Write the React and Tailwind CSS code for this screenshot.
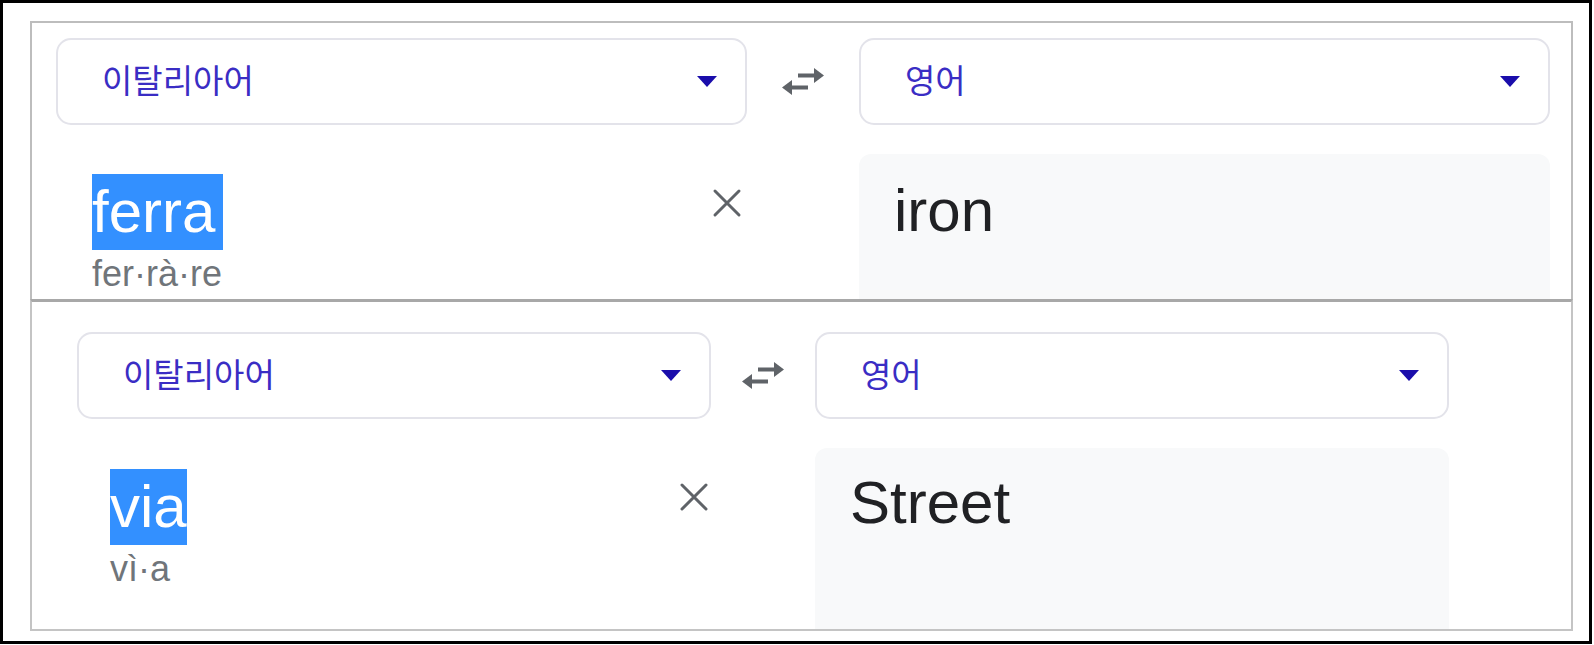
import React from "react";

const latin = { fontFamily: '"Liberation Sans", Arial, sans-serif' };
const korean = { fontFamily: '"Liberation Sans", "Noto Sans CJK KR", sans-serif' };

const DropArrow = () => (
  <svg width="20" height="11" viewBox="0 0 20 11" className="shrink-0">
    <path d="M0 0 L20 0 L10 11 Z" fill="#1a0dab" />
  </svg>
);

const SwapIcon = () => (
  <svg width="42" height="27" viewBox="0 0 42 27">
    <g fill="#5f6368">
      <rect x="16" y="5.5" width="18" height="4" />
      <path d="M32 0 L42 7.5 L32 15 Z" />
      <rect x="9" y="17.5" width="17" height="4" />
      <path d="M10 12 L0 19.5 L10 27 Z" />
    </g>
  </svg>
);

const CloseIcon = () => (
  <svg width="30" height="30" viewBox="0 0 30 30">
    <path d="M3 3 L27 27 M27 3 L3 27" stroke="#5f6368" strokeWidth="3" strokeLinecap="round" />
  </svg>
);

const LangSelect = ({ label }) => (
  <div className="h-[87px] border-2 border-[#e3e3ea] rounded-[15px] flex items-center justify-between pl-[44px] pr-[28px]">
    <span className="text-[33px] text-[#3a2dc4]" style={korean}>
      {label}
    </span>
    <DropArrow />
  </div>
);

const Panel = ({ word, pron, result, colW, gapW, textPl, textPt, xMr, outPt, outH, hlPr }) => (
  <div className="grid gap-y-[29px]" style={{ gridTemplateColumns: `${colW}px ${gapW}px ${colW}px` }}>
    <LangSelect label="이탈리아어" />
    <div className="flex items-center justify-center">
      <SwapIcon />
    </div>
    <LangSelect label="영어" />

    {/* source */}
    <div className="flex justify-between" style={latin}>
      <div style={{ paddingLeft: textPl, paddingTop: textPt }}>
        <span className="inline-block h-[76px] leading-[76px] text-[60px] text-white bg-[#3390ff]" style={{ paddingRight: hlPr }}>
          {word}
        </span>
        <div className="mt-[3px] text-[36px] leading-[1.15] text-[#70757a]">{pron}</div>
      </div>
      <div className="mt-[34px]" style={{ marginRight: xMr }}>
        <CloseIcon />
      </div>
    </div>
    <div />
    {/* result */}
    <div className="bg-[#f8f9fa] rounded-t-[12px] pl-[35px]" style={{ ...latin, paddingTop: outPt, height: outH }}>
      <div className="text-[60px] leading-[1.15] text-[#202124]">{result}</div>
    </div>
  </div>
);

export default function App() {
  return (
    <div className="w-[1594px] h-[645px] bg-white">
      <div className="w-[1592px] h-[644px] border-[3px] border-black bg-white pl-[27px] pt-[18px]">
        <div className="w-[1543px] h-[278px] border-t-2 border-x-2 border-[#bdbdbd] overflow-hidden pl-[24px] pt-[15px]">
          <Panel
            word="ferra"
            pron="fer·rà·re"
            result="iron"
            colW={691}
            gapW={112}
            textPl={36}
            textPt={20}
            xMr={5}
            outPt={22}
            outH={200}
            hlPr={8}
          />
        </div>
        <div className="w-[1543px] h-[332px] border-t-[3px] border-t-[#a8a8a8] border-x-2 border-b-2 border-[#c4c4c4] overflow-hidden pl-[45px] pt-[30px]">
          <Panel
            word="via"
            pron="vì·a"
            result="Street"
            colW={634}
            gapW={104}
            textPl={33}
            textPt={21}
            xMr={2}
            outPt={20}
            outH={181}
            hlPr={0}
          />
        </div>
      </div>
    </div>
  );
}
